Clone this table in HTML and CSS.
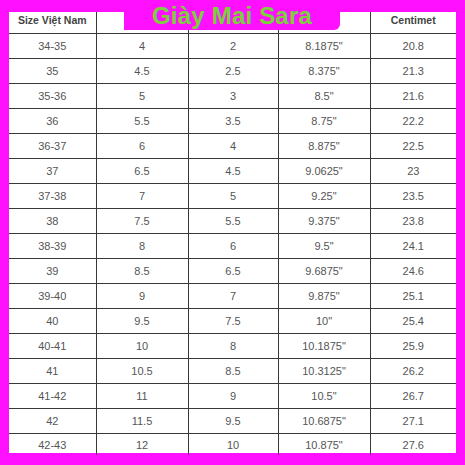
FILE: index.html
```html
<!DOCTYPE html>
<html lang="vi">
<head>
<meta charset="utf-8">
<link rel="stylesheet" href="styles.css">
</head>
<body>
<div class="sheet">
  <table class="sizes">
    <colgroup>
      <col class="c1"><col class="c2"><col class="c3"><col class="c4"><col class="c5">
    </colgroup>
    <thead>
      <tr class="head"><th>Size Việt Nam</th><th></th><th></th><th></th><th>Centimet</th></tr>
    </thead>
    <tbody>
      <tr><td>34-35</td><td>4</td><td>2</td><td>8.1875"</td><td>20.8</td></tr>
      <tr><td>35</td><td>4.5</td><td>2.5</td><td>8.375"</td><td>21.3</td></tr>
      <tr><td>35-36</td><td>5</td><td>3</td><td>8.5"</td><td>21.6</td></tr>
      <tr><td>36</td><td>5.5</td><td>3.5</td><td>8.75"</td><td>22.2</td></tr>
      <tr><td>36-37</td><td>6</td><td>4</td><td>8.875"</td><td>22.5</td></tr>
      <tr><td>37</td><td>6.5</td><td>4.5</td><td>9.0625"</td><td>23</td></tr>
      <tr><td>37-38</td><td>7</td><td>5</td><td>9.25"</td><td>23.5</td></tr>
      <tr><td>38</td><td>7.5</td><td>5.5</td><td>9.375"</td><td>23.8</td></tr>
      <tr><td>38-39</td><td>8</td><td>6</td><td>9.5"</td><td>24.1</td></tr>
      <tr><td>39</td><td>8.5</td><td>6.5</td><td>9.6875"</td><td>24.6</td></tr>
      <tr><td>39-40</td><td>9</td><td>7</td><td>9.875"</td><td>25.1</td></tr>
      <tr><td>40</td><td>9.5</td><td>7.5</td><td>10"</td><td>25.4</td></tr>
      <tr><td>40-41</td><td>10</td><td>8</td><td>10.1875"</td><td>25.9</td></tr>
      <tr><td>41</td><td>10.5</td><td>8.5</td><td>10.3125"</td><td>26.2</td></tr>
      <tr><td>41-42</td><td>11</td><td>9</td><td>10.5"</td><td>26.7</td></tr>
      <tr><td>42</td><td>11.5</td><td>9.5</td><td>10.6875"</td><td>27.1</td></tr>
      <tr class="last"><td>42-43</td><td>12</td><td>10</td><td>10.875"</td><td>27.6</td></tr>
    </tbody>
  </table>
  <div class="banner">Giày Mai Sara</div>
</div>
</body>
</html>
```

FILE: styles.css
```css
html, body {
  margin: 0;
  padding: 0;
}
body {
  width: 465px;
  height: 465px;
  background: #ff11ff;
  overflow: hidden;
  font-family: "Liberation Sans", Arial, sans-serif;
}
.sheet {
  position: relative;
  margin: 12px 0 0 9px;
  width: 447px;
  height: 441px;
  background: #fff;
}
.sizes {
  width: 447px;
  border-collapse: collapse;
  table-layout: fixed;
  color: #555;
  font-size: 11px;
}
.c1 { width: 87px; }
.c2 { width: 92px; }
.c3 { width: 90px; }
.c4 { width: 92px; }
.c5 { width: 86px; }
.sizes th,
.sizes td {
  padding: 0;
  text-align: center;
  border-right: 1px solid #383838;
  border-bottom: 1px solid #383838;
}
.sizes th:last-child,
.sizes td:last-child {
  border-right: none;
}
.sizes th {
  font-weight: bold;
  font-size: 10.5px;
  color: #444;
  height: 19px;
  vertical-align: top;
  padding-top: 2px;
}
.sizes td {
  height: 24px;
}
.sizes tr.last td {
  border-bottom: none;
  height: 21px;
}
.banner {
  position: absolute;
  left: 115px;
  top: -12px;
  width: 216px;
  height: 30px;
  background: #ff11ff;
  border-bottom-right-radius: 6px;
  color: #7ad13c;
  font-weight: bold;
  font-size: 24px;
  line-height: 31px;
  text-align: center;
  letter-spacing: 0.2px;
}
```
